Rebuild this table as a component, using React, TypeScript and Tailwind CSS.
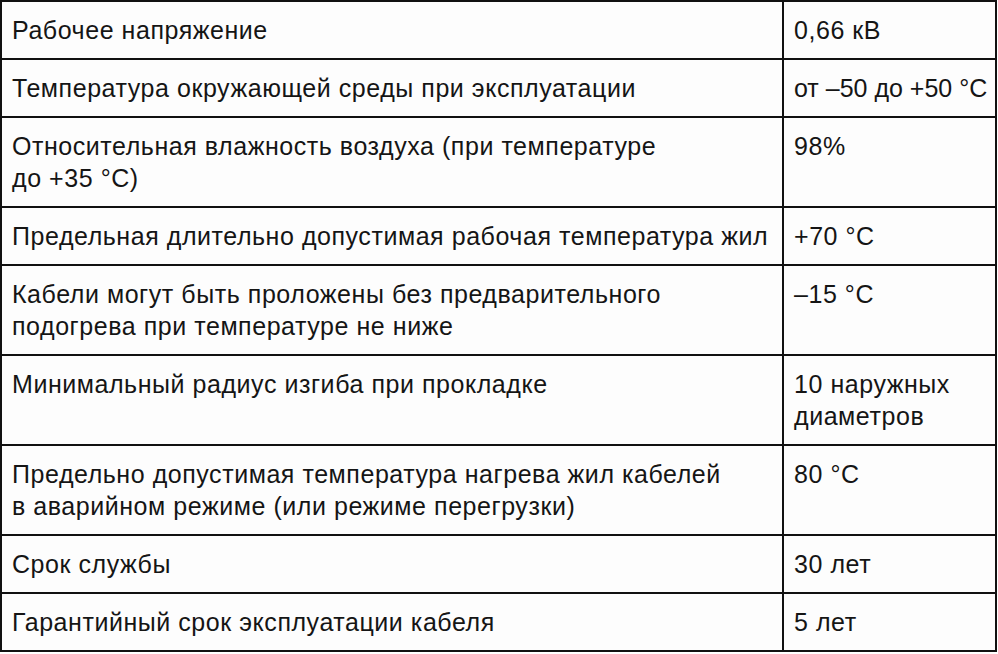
import React from "react";

const rows: { left: string[]; right: string[]; tight?: boolean }[] = [
  { left: ["Рабочее напряжение"], right: ["0,66 кВ"] },
  { left: ["Температура окружающей среды при эксплуатации"], right: ["от –50 до +50 °C"], tight: true },
  { left: ["Относительная влажность воздуха (при температуре", "до +35 °C)"], right: ["98%"] },
  { left: ["Предельная длительно допустимая рабочая температура жил"], right: ["+70 °C"] },
  { left: ["Кабели могут быть проложены без предварительного", "подогрева при температуре не ниже"], right: ["–15 °C"] },
  { left: ["Минимальный радиус изгиба при прокладке"], right: ["10 наружных", "диаметров"] },
  { left: ["Предельно допустимая температура нагрева жил кабелей", "в аварийном режиме (или режиме перегрузки)"], right: ["80 °C"] },
  { left: ["Срок службы"], right: ["30 лет"] },
  { left: ["Гарантийный срок эксплуатации кабеля"], right: ["5 лет"] },
];

export default function App() {
  return (
    <div className="w-[998px] h-[654px] bg-white overflow-hidden">
      <div
        className="w-[997px] border-2 border-[#111] bg-[#fdfdfd] text-[#151515] text-[25px] leading-[32px] tracking-[0.55px]"
        style={{ fontFamily: '"Liberation Sans", Arial, sans-serif' }}
      >
        {rows.map((r, i) => (
          <div
            key={i}
            className={`flex ${i < rows.length - 1 ? "border-b-2 border-[#111]" : ""}`}
          >
            <div className="w-[782px] shrink-0 border-r-2 border-[#111] pl-[10px] py-[12px] whitespace-nowrap">
              {r.left.map((l, j) => (
                <div key={j}>{l}</div>
              ))}
            </div>
            <div
              className={`flex-1 pl-[10px] py-[12px] whitespace-nowrap ${r.tight ? "tracking-[0px]" : ""}`}
            >
              {r.right.map((l, j) => (
                <div key={j}>{l}</div>
              ))}
            </div>
          </div>
        ))}
      </div>
    </div>
  );
}
